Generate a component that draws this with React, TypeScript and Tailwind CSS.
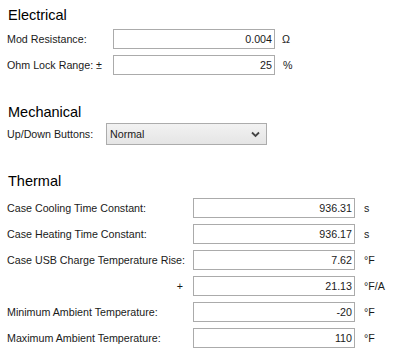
const heading = "text-[14.5px] leading-[18px] text-black";

function Row({
  label,
  value,
  unit,
  labelWidth,
  unitPad = "pl-[9px]",
  labelAlign = "",
}: {
  label: string;
  value: string;
  unit: string;
  labelWidth: string;
  unitPad?: string;
  labelAlign?: string;
}) {
  return (
    <div className="flex h-[20px] items-center">
      <div className={`${labelWidth} pl-[7px] leading-[20px] ${labelAlign}`}>{label}</div>
      <div className="h-[20px] w-[162px] border border-[#ababab] bg-white pr-[2px] text-right leading-[18px]">
        {value}
      </div>
      <div className={`${unitPad} leading-[20px]`}>{unit}</div>
    </div>
  );
}

export default function App() {
  return (
    <div className="h-[350px] w-[405px] overflow-hidden bg-white font-['Liberation_Sans',Arial,sans-serif] text-[10.7px] text-[#1a1a1a]">
      <div className="pl-[8px] pt-[6px]">
        <h2 className={heading}>Electrical</h2>
      </div>
      <div className="mt-[5px] flex flex-col gap-[6px]">
        <Row label="Mod Resistance:" value="0.004" unit="Ω" labelWidth="w-[113px]" unitPad="pl-[7px]" />
        <Row label="Ohm Lock Range: ±" value="25" unit="%" labelWidth="w-[113px]" unitPad="pl-[8px]" />
      </div>

      <div className="pl-[8px] pt-[28px]">
        <h2 className={heading}>Mechanical</h2>
      </div>
      <div className="mt-[2px] flex h-[22px] items-center">
        <div className="w-[106px] pl-[7px]">Up/Down Buttons:</div>
        <div className="flex h-[22px] w-[161px] items-center justify-between border border-[#acacac] bg-gradient-to-b from-[#f2f2f2] to-[#e5e5e5] pl-[3px] pr-[6px]">
          <span>Normal</span>
          <svg width="9" height="7" viewBox="0 0 9 7">
            <path d="M1 1.5 L4.5 5 L8 1.5" fill="none" stroke="#444" strokeWidth="1.8" />
          </svg>
        </div>
      </div>

      <div className="pl-[8px] pt-[27px]">
        <h2 className={heading}>Thermal</h2>
      </div>
      <div className="mt-[8px] flex flex-col gap-[6px]">
        <Row label="Case Cooling Time Constant:" value="936.31" unit="s" labelWidth="w-[193px]" />
        <Row label="Case Heating Time Constant:" value="936.17" unit="s" labelWidth="w-[193px]" />
        <Row label="Case USB Charge Temperature Rise:" value="7.62" unit="°F" labelWidth="w-[193px]" />
        <Row
          label="+"
          value="21.13"
          unit="°F/A"
          labelWidth="w-[193px]"
          labelAlign="pr-[10px] text-right"
        />
        <Row label="Minimum Ambient Temperature:" value="-20" unit="°F" labelWidth="w-[193px]" />
        <Row label="Maximum Ambient Temperature:" value="110" unit="°F" labelWidth="w-[193px]" />
      </div>
    </div>
  );
}
